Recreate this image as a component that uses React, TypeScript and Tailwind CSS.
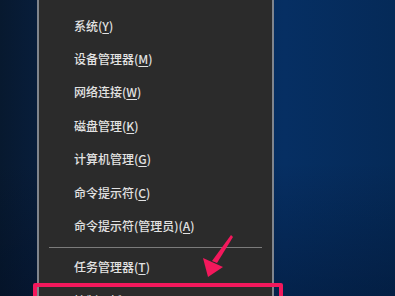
import React from 'react';

// Win+X quick menu items (label, shortcut letter)
const items: [string, string][] = [
  ['系统', 'Y'],
  ['设备管理器', 'M'],
  ['网络连接', 'W'],
  ['磁盘管理', 'K'],
  ['计算机管理', 'G'],
  ['命令提示符', 'C'],
  ['命令提示符(管理员)', 'A'],
];

function MenuRow({ label, hotkey }: { label: string; hotkey: string }) {
  return (
    <div className="h-[33.4px] flex items-center pl-[35px] text-[12px] font-medium text-[#e2e2e2] leading-none whitespace-nowrap">
      {label}(<span className="underline underline-offset-2">{hotkey}</span>)
    </div>
  );
}

export default function App() {
  return (
    <div
      className="relative w-[395px] h-[296px] overflow-hidden bg-[linear-gradient(to_right,#07192f_0%,#081d3a_9%,#062f63_72%,#052a58_100%)]"
      style={{ fontFamily: '"Noto Sans CJK SC", "Noto Sans", sans-serif' }}
    >
      <div className="absolute inset-0 bg-[linear-gradient(to_bottom,rgba(0,0,0,0)_55%,rgba(0,10,30,0.35)_100%)]" />

      <div className="relative flex h-full">
        <div className="w-[37px] shrink-0" />
        {/* menu panel */}
        <div className="w-[237px] h-full border-x-2 border-[#80858d] bg-[#2b2b2b] pt-[9px]">
          {items.map(([label, key]) => (
            <MenuRow key={label} label={label} hotkey={key} />
          ))}
          <div className="mt-[4px] mx-[10px] h-px bg-[#7b7b7b]" />
          <div className="mt-[3px]">
            <MenuRow label="任务管理器" hotkey="T" />
            <MenuRow label="控制面板" hotkey="P" />
          </div>
        </div>
      </div>

      {/* red highlight box */}
      <div className="absolute left-[33px] top-[283px] w-[250px] h-[40px] border-[4px] border-[#f3185c] rounded-[2px]" />

      {/* red arrow */}
      <svg className="absolute left-0 top-0" width="395" height="296" viewBox="0 0 395 296">
        <polygon points="231,235 233,237 217,263 212,261" fill="#f3185c" />
        <polygon points="208,277 203,258 223,267" fill="#f3185c" />
      </svg>
    </div>
  );
}
